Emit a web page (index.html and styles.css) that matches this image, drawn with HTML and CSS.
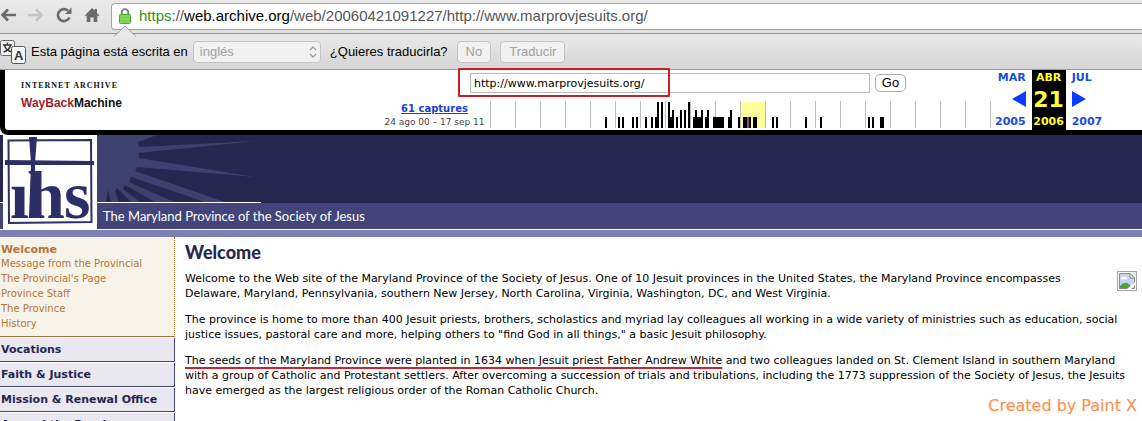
FILE: index.html
```html
<!DOCTYPE html>
<html lang="en">
  <head>
    <meta charset="utf-8">
    <title>Maryland Province of the Society of Jesus</title>
    <link rel="stylesheet" href="styles.css">
  </head>
  <body>
    <div id="toolbar">
      <button class="nav" aria-label="Back"><svg width="16" height="16" viewBox="0 0 16 16"><path d="M16 8H3M8 2.500L2.500 8L8 13.500" fill="none" stroke="#6b6b6b" stroke-width="2.600"/></svg></button>
      <button class="nav" aria-label="Forward" disabled><svg width="16" height="16" viewBox="0 0 16 16"><path d="M0 8H13M8 2.500L13.500 8L8 13.500" fill="none" stroke="#c3c3c3" stroke-width="2.600"/></svg></button>
      <button class="nav" aria-label="Reload"><svg width="16" height="16" viewBox="0 0 16 16"><path d="M13.500 10.500A6 6 0 1 1 12 3.600" fill="none" stroke="#6b6b6b" stroke-width="2.600"/><path d="M15.500 .5V7H9Z" fill="#6b6b6b"/></svg></button>
      <button class="nav" aria-label="Home"><svg width="16" height="16" viewBox="0 0 16 16"><path d="M8 1L10.600 3.600V2H13V6L15.500 8.800H13.300V15H9.600V10.500H6.400V15H2.700V8.800H.5Z" fill="#6b6b6b"/></svg></button>
      <div id="omnibox">
        <svg width="12" height="16" viewBox="0 0 12 16"><path d="M2.700 8V4.500A3.300 3.300 0 0 1 9.300 4.500V8" fill="none" stroke="#777" stroke-width="1.800"/><rect x=".5" y="6.500" width="11" height="9" rx="1" fill="#7ed957" stroke="#4ba82e"/><path d="M1 9.500H11M1 12.500H11" stroke="#74cf4d"/></svg>
        <div class="url" contenteditable="true" role="textbox" aria-label="Address" spellcheck="false"><span class="secure">https</span>://<span class="host">web.archive.org</span>/web/20060421091227/http://www.marprovjesuits.org/</div>
        <svg class="notch" width="22" height="12" viewBox="0 0 22 12"><path d="M0 12L11 1L22 12Z" fill="#e9e9e9"/><path d="M0 11.500L11 1L22 11.500" fill="none" stroke="#a0a0a0"/></svg>
      </div>
    </div>

    <div id="translate">
      <svg width="27" height="26" viewBox="0 0 27 26">
        <rect x=".5" y="1.500" width="14" height="15" rx="2" fill="#f4f4f4" stroke="#666"/>
        <path d="M3 6H12M7.500 3.500V6M4.500 6.500C5.500 10 8.500 12 11.500 13M10.500 6.500C9.500 10 7 12 3.500 13" fill="none" stroke="#333" stroke-width="1.400"/>
        <rect x="11.500" y="7.500" width="14" height="17" rx="2" fill="#f8f8f8" stroke="#555"/>
        <text x="14" y="21" class="glyph">A</text>
      </svg>
      <label for="lang">Esta página está escrita en</label>
      <div class="select">
        <select id="lang" disabled><option>inglés</option></select>
        <svg width="8" height="14" viewBox="0 0 8 14"><path d="M1 5L4 2L7 5M1 9L4 12L7 9" fill="none" stroke="#9a9a9a" stroke-width="1.300"/></svg>
      </div>
      <span class="ask">¿Quieres traducirla?</span>
      <button disabled>No</button>
      <button disabled>Traducir</button>
    </div>

    <div id="wayback">
      <a class="wmlogo" href="#"><span class="ia">INTERNET ARCHIVE</span><span class="wm"><b>WayBack</b>Machine</span></a>
      <div class="search">
        <form class="urlform">
          <input type="text" value="http://www.marprovjesuits.org/" aria-label="Archived address">
          <button type="button">Go</button>
          <span class="redbox"></span>
        </form>
        <div class="range">
          <div class="captures"><a href="#">61 captures</a><span>24 ago 00 – 17 sep 11</span></div>
          <svg width="502" height="29" viewBox="0 0 502 29" shape-rendering="crispEdges">
            <path d="M251 2h24v26h-24z" fill="#ff9"/>
            <path d="M0 1h1v27h-1zM25 1h1v27h-1zM50 1h1v27h-1zM75 1h1v27h-1zM100 1h1v27h-1zM125 1h1v27h-1zM150 1h1v27h-1zM175 1h1v27h-1zM200 1h1v27h-1zM225 1h1v27h-1zM250 1h1v27h-1zM275 1h1v27h-1zM300 1h1v27h-1zM325 1h1v27h-1zM350 1h1v27h-1zM375 1h1v27h-1zM400 1h1v27h-1zM425 1h1v27h-1zM450 1h1v27h-1zM475 1h1v27h-1zM500 1h1v27h-1z" fill="#bbb"/>
            <!-- short, medium and tall bars -->
            <path d="M115 17h2v11h-2zM128 17h2v11h-2zM132 17h2v11h-2zM142 17h2v11h-2zM146 17h2v11h-2zM155 17h2v11h-2zM161 17h2v11h-2zM165 17h3v11h-3zM178 17h6v11h-6zM186 17h2v11h-2zM203 17h10v11h-10zM215 17h4v11h-4zM223 17h11v11h-11zM238 17h4v11h-4zM248 17h2v11h-2zM253 17h4v11h-4zM259 17h2v11h-2zM263 17h4v11h-4zM282 17h2v11h-2zM286 17h2v11h-2zM315 17h2v11h-2zM330 17h2v11h-2zM378 17h2v11h-2zM382 17h2v11h-2zM390 17h4v11h-4z"/>
            <path d="M182 10h2v18h-2zM190 10h2v18h-2zM194 10h2v18h-2zM205 10h2v18h-2zM211 10h2v18h-2zM217 10h2v18h-2zM240 10h2v18h-2z"/>
            <path d="M167 2h2v26h-2zM171 2h2v26h-2zM178 2h2v26h-2zM198 2h2v26h-2z"/>
            <path d="M257 17h2v11h-2z" fill="#a0407a"/>
          </svg>
        </div>
      </div>
      <table class="dates">
        <tr class="month"><td><a href="#">MAR</a></td><td class="now">ABR</td><td><a href="#">JUL</a></td></tr>
        <tr class="day">
          <td><a href="#" aria-label="Previous capture"><svg width="14" height="16" viewBox="0 0 14 16"><path d="M14 0V16L0 8Z"/></svg></a></td>
          <td class="now">21</td>
          <td><a href="#" aria-label="Next capture"><svg width="14" height="16" viewBox="0 0 14 16"><path d="M0 0V16L14 8Z"/></svg></a></td>
        </tr>
        <tr class="year"><td><a href="#">2005</a></td><td class="now">2006</td><td><a href="#">2007</a></td></tr>
      </table>
    </div>

    <div id="header">
      <svg class="seal" width="94" height="94" viewBox="0 0 94 94">
        <rect width="94" height="94" fill="#fff"/>
        <path d="M5.500 5.500L88 5L88.500 87L6 88Z" fill="none" stroke="#2b2f66" stroke-width="2"/>
        <path d="M26 2H34L32 28L33 82H26L28 28Z" fill="#2b2f66"/>
        <path d="M2 25L91 26V30L2 30Z" fill="#2b2f66"/>
        <text x="7" y="83">ı</text>
        <text x="24" y="83">h</text>
        <text x="61" y="83">s</text>
      </svg>
      <div class="banner">
        <svg class="rays" width="164" height="67" viewBox="0 0 164 67">
          <path d="M0 0H60L41 7L42 12L160 6L42 18L42 23L158 42L40 32L38 36L128 67H108L34 42L32 47L77 67H58L28 50L26 54L43 67H34L20 53L18 56L22 67H14L11 55L9 67H0Z" fill="#3e4070"/>
        </svg>
      </div>
      <div class="tagline">The Maryland Province of the Society of Jesus</div>
    </div>

    <div id="main">
      <div id="menu">
        <div class="open">
          <a class="title" href="#">Welcome</a>
          <a href="#">Message from the Provincial</a>
          <a href="#">The Provincial's Page</a>
          <a href="#">Province Staff</a>
          <a href="#">The Province</a>
          <a href="#">History</a>
        </div>
        <a class="item" href="#">Vocations</a>
        <a class="item" href="#">Faith &amp; Justice</a>
        <a class="item" href="#">Mission &amp; Renewal Office</a>
        <a class="item" href="#">Around the Province</a>
      </div>
      <div id="content">
        <h1>Welcome</h1>
        <svg class="missing" width="20" height="20" viewBox="0 0 20 20">
          <rect x=".5" y=".5" width="19" height="19" fill="#fff" stroke="#a5a5a5"/>
          <path d="M2.500 2.500H13L17.500 7V17.500H2.500Z" fill="#c3d5f2" stroke="#888"/>
          <path d="M13 2.500V7H17.500Z" fill="#fff" stroke="#888"/>
          <ellipse cx="7" cy="7" rx="3" ry="1.500" fill="#fff"/>
          <path d="M3 17V15Q8 9 13 14V17Z" fill="#4da23a"/>
          <path d="M10 18L18 11V14L14 18Z" fill="#fff"/>
        </svg>
        <p>Welcome to the Web site of the Maryland Province of the Society of Jesus. One of 10 Jesuit provinces in the United States, the Maryland Province encompasses<br>Delaware, Maryland, Pennsylvania, southern New Jersey, North Carolina, Virginia, Washington, DC, and West Virginia.</p>
        <p>The province is home to more than 400 Jesuit priests, brothers, scholastics and myriad lay colleagues all working in a wide variety of ministries such as education, social<br>justice issues, pastoral care and more, helping others to "find God in all things," a basic Jesuit philosophy.</p>
        <p><span class="marked">The seeds of the Maryland Province were planted in 1634 when Jesuit priest Father Andrew White</span> and two colleagues landed on St. Clement Island in southern Maryland<br>with a group of Catholic and Protestant settlers. After overcoming a succession of trials and tribulations, including the 1773 suppression of the Society of Jesus, the Jesuits<br>have emerged as the largest religious order of the Roman Catholic Church.</p>
      </div>
    </div>
    <div id="credit">Created by Paint X</div>
  </body>
</html>
```
FILE: styles.css
```css
* {box-sizing: border-box;}
body {margin: 0; height: 100vh; overflow: hidden; position: relative; background: #fff; color: #000; font-family: "DejaVu Sans", sans-serif; font-size: 11px;}
button, select, input {font-family: inherit; margin: 0;}
svg {display: block; flex: none;}
a {text-decoration: none;}

/* browser chrome */
#toolbar {display: flex; align-items: center; height: 34px; padding-bottom: 3px; background: linear-gradient(#eaeaea, #e0e0e0); border-bottom: 1px solid #959595;}
.nav {border: none; background: none; padding: 0; margin-right: 12px;}
#omnibox {position: relative; display: flex; align-items: center; flex: 1; height: 27px; margin-top: 2px; margin-left: -1px; padding-left: 7px; background: #fff; border: 1px solid #a5a5a5; border-right: none; border-radius: 4px 0 0 4px;}
.url {margin-left: 8px; font: 15px/20px "Liberation Sans", sans-serif; color: #555; white-space: nowrap; outline: none;}
.secure {color: #2f8f1b;}
.host {color: #000;}
.notch {position: absolute; left: 2px; top: 21px;}
#translate {display: flex; align-items: center; height: 36px; background: linear-gradient(#e9e9e9, #d6d6d6); border-bottom: 1px solid #9b9b9b; font: 13px/16px "Liberation Sans", sans-serif;}
#translate label {margin-left: 4px;}
.glyph {font: bold 13px "Liberation Sans", sans-serif; fill: #333;}
.select {position: relative; margin-left: 5px;}
.select svg {position: absolute; right: 4px; top: 4px;}
#translate select, #translate button {appearance: none; height: 22px; border: 1px solid #c4c4c4; border-radius: 4px; background: #f1f1f1; color: #a0a0a0; font-size: 13px; opacity: 1;}
#translate select {display: block; width: 128px; padding: 0 6px;}
#translate button {padding: 0 8px; margin-right: 9px;}
.ask {margin: 0 9px;}

/* wayback bar */
#wayback {display: flex; height: 65px; background: #fff; border: solid #000; border-width: 0 0 5px 5px; border-bottom-left-radius: 8px;}
.wmlogo {display: flex; flex-direction: column; width: 365px; padding: 11px 0 0 16px; color: #111;}
.ia {font: bold 8px/9px "Liberation Serif", serif; letter-spacing: 1px;}
.wm {font: bold 12px/26px "Liberation Sans", sans-serif;}
.wm b {color: #a01c2c;}
.search {width: 622px;}
.urlform {position: relative; display: flex; gap: 5px; margin-left: 100px; padding-top: 3px;}
.urlform input {width: 400px; height: 20px; padding: 0 3px; border: 1px solid #bbb; font-size: 11px;}
.urlform button {width: 31px; height: 18px; margin-top: 1px; padding: 0; border: 1px solid #aaa; border-radius: 5px; background: #fff; font: 13px/14px "Liberation Sans", sans-serif;}
.redbox {position: absolute; left: -12px; top: -2px; width: 212px; height: 29px; border: 2px solid #cc1c24; border-radius: 1px;}
.range {display: flex; padding-top: 7px;}
.captures {width: 120px; flex: none; padding-left: 9px; text-align: center;}
.captures a {display: block; font: bold 10px/17px "DejaVu Sans", sans-serif; color: #1b3fd6; text-decoration: underline;}
.captures span {display: block; font-size: 9px; line-height: 10px; color: #444;}
.dates {height: 60px; border-collapse: collapse; color: #ff3; font-weight: bold;}
.dates td {width: 34px; padding: 0 3px; text-align: left;}
.dates td:first-child {width: 38px; padding-right: 6px; text-align: right;}
.dates td:last-child {width: 46px; padding-left: 6px;}
.dates td.now {background: #000; text-align: center; padding: 0;}
.dates a {color: #1b4be0;}
.month, .year {line-height: 16px;}
.day {font-size: 22px; line-height: 26px;}
.day svg {display: inline-block; fill: #0a3cff;}

/* site header */
#header {position: relative; background: #25274f; border-bottom: 7px solid #7c80b4;}
.seal {position: absolute; left: 3px; top: 0; z-index: 1;}
.seal text {font: bold 68px "Liberation Serif", serif; fill: #2b2f66;}
.banner {width: 261px; height: 68px; padding-left: 97px; border-bottom: 1px solid #fff;}
.tagline {height: 27px; padding-left: 103px; background: #42447a; border-bottom: 1px solid #fff; color: #fff; font: 13px/26px Lato, sans-serif;}

/* page */
#main {display: flex;}
#menu {width: 175px; flex: none;}
#menu a {display: block;}
.open {height: 100px; padding: 6px 1px; background: #f8f3e8; border-right: 1px dotted #b5763a; border-bottom: 1px solid #a8703a; margin-bottom: 1px;}
.open a {color: #b5763a; font-size: 10px; line-height: 15px;}
#menu .title {font-size: 11px; line-height: 13px; font-weight: bold;}
.item {height: 24px; margin-bottom: 1px; padding-left: 1px; background: #e9e8f0; border: solid #42447a; border-width: 0 1px 1px 0; color: #25274f; font-size: 11px; line-height: 24px; font-weight: bold;}
#content {flex: 1; padding: 5px 5px 0 10px;}
h1 {margin: 0 0 9px; font: 900 18px/20px Lato, sans-serif; color: #25274f;}
p {margin: 0 0 11px; line-height: 15px; white-space: nowrap;}
.missing {float: right;}
.marked {text-decoration: underline 2px #d0202c; text-underline-offset: 3px;}
#credit {position: absolute; right: 5px; bottom: 5px; font-size: 16px; line-height: 20px; color: #f98d5e; text-shadow: 0 1px 2px #fff0b0;}
```
